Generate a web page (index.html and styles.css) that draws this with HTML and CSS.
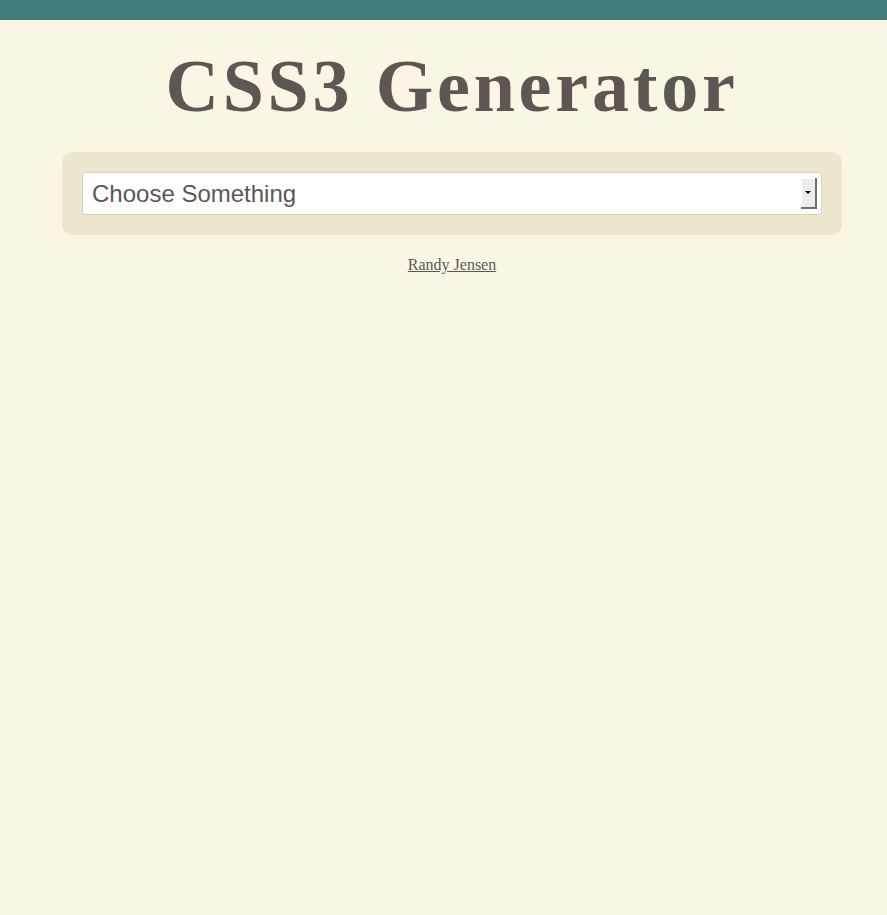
FILE: index.html
```html
<!DOCTYPE html>
<html lang="en">
<head>
<meta charset="utf-8">
<title>CSS3 Generator</title>
<link rel="stylesheet" href="styles.css">
</head>
<body>
<div class="topbar"></div>
<main class="page">
  <h1 class="title">CSS3 Generator</h1>
  <div class="panel">
    <div class="select-wrap">
      <select class="select">
        <option>Choose Something</option>
      </select>
      <span class="select-btn"><span class="arrow"></span></span>
    </div>
  </div>
  <p class="credit"><a href="#">Randy Jensen</a></p>
</main>
</body>
</html>
```
FILE: styles.css
```css
html, body {
  margin: 0;
  padding: 0;
  background: #f9f6e4;
}
body {
  font-family: "Liberation Serif", serif;
  color: #5f5654;
}
.topbar {
  height: 20px;
  background: #417f7e;
}
.page {
  width: 780px;
  margin-left: 62px;
  display: flex;
  flex-direction: column;
  align-items: center;
}
.title {
  margin: 0;
  height: 132px;
  font-family: "Liberation Serif", serif;
  font-weight: bold;
  font-size: 74px;
  line-height: 132px;
  letter-spacing: 3.8px;
  color: #5f5654;
}
.panel {
  align-self: stretch;
  background: #eee7cf;
  border-radius: 10px;
  padding: 20px;
}
.select-wrap {
  position: relative;
}
.select {
  display: block;
  width: 100%;
  height: 43px;
  box-sizing: border-box;
  appearance: none;
  -webkit-appearance: none;
  background: #fff;
  border: 1px solid #d9d1b1;
  border-radius: 3px;
  padding: 0 9px;
  font-family: "Liberation Sans", Arial, sans-serif;
  font-size: 24px;
  color: #5f5654;
}
.select-btn {
  position: absolute;
  right: 5px;
  top: 6px;
  width: 14px;
  height: 29px;
  background: #ededed;
  border-right: 2px solid #6f6f6f;
  border-bottom: 2px solid #6f6f6f;
  box-shadow: inset 1px 1px 0 #fff;
  display: flex;
  align-items: center;
  justify-content: center;
}
.arrow {
  width: 0;
  height: 0;
  border-left: 3px solid transparent;
  border-right: 3px solid transparent;
  border-top: 3px solid #000;
}
.credit {
  margin: 20px 0 0;
  font-size: 16px;
  line-height: 20px;
}
.credit a {
  color: #5f5654;
}
```
